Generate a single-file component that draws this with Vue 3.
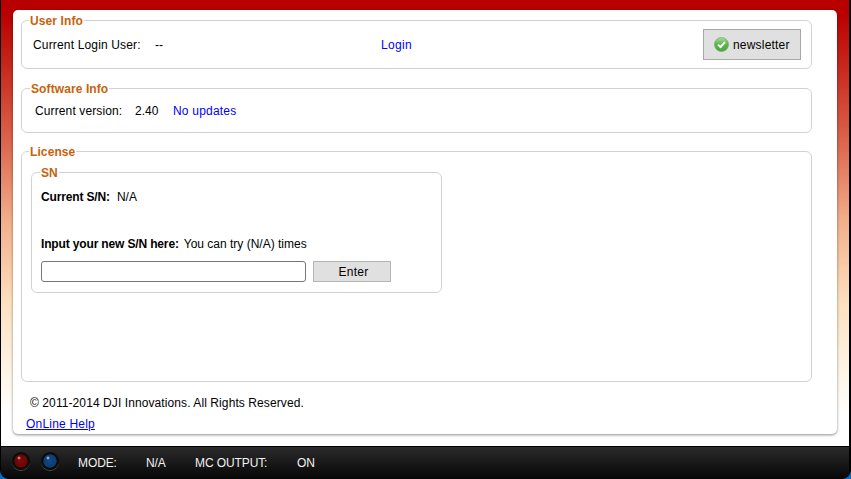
<template>
  <div class="window">
    <div class="stage">
      <main class="card">
        <fieldset class="group user">
          <legend>User Info</legend>
          <div class="user-row">
            <span class="lbl">Current Login User:</span>
            <span class="val">--</span>
            <a class="login">Login</a>
            <button class="news">
              <svg width="15" height="15" viewBox="0 0 15 15">
                <defs>
                  <linearGradient id="g" x1="0" y1="0" x2="0" y2="1">
                    <stop offset="0" stop-color="#a9dc9a" />
                    <stop offset="0.5" stop-color="#58b548" />
                    <stop offset="1" stop-color="#49a83a" />
                  </linearGradient>
                </defs>
                <circle cx="7.5" cy="7.5" r="7" fill="url(#g)" stroke="#6a9c62" stroke-width="0.6" />
                <path d="M4 7.6 L6.5 10 L11 5.2" fill="none" stroke="#fff" stroke-width="2" />
              </svg>
              <span>newsletter</span>
            </button>
          </div>
        </fieldset>

        <fieldset class="group soft">
          <legend>Software Info</legend>
          <div class="soft-row">
            <span class="ver-l">Current version:</span>
            <span class="ver">2.40</span>
            <a class="upd">No updates</a>
          </div>
        </fieldset>

        <fieldset class="group lic">
          <legend>License</legend>
          <fieldset class="group sn">
            <legend>SN</legend>
            <div class="row1"><b>Current S/N:</b><span>N/A</span></div>
            <div class="row2"><b>Input your new S/N here:</b><span>You can try (N/A) times</span></div>
            <div class="row3">
              <input class="inp" type="text" />
              <button class="enter">Enter</button>
            </div>
          </fieldset>
        </fieldset>

        <p class="copy">© 2011-2014 DJI Innovations. All Rights Reserved.</p>
        <a class="help">OnLine Help</a>
      </main>
    </div>

    <footer class="bar">
      <span class="led red"></span>
      <span class="led blue"></span>
      <span class="s mode">MODE:</span>
      <span class="s na">N/A</span>
      <span class="s mc">MC OUTPUT:</span>
      <span class="s on">ON</span>
    </footer>
  </div>
</template>

<script setup>
</script>

<style>
html, body { margin: 0; padding: 0; background: #0a6cc0; }
</style>

<style scoped>
.window {
  width: 851px;
  height: 479px;
  box-sizing: border-box;
  padding: 0 2px 0 1px;
  background: #000;
  border-radius: 0 0 9px 9px;
  font: 12px/14px "Liberation Sans", Arial, sans-serif;
  color: #000;
  overflow: hidden;
  display: flex;
  flex-direction: column;
}
.stage {
  height: 446px;
  flex: none;
  overflow: hidden;
  background: linear-gradient(#b90000 0, #b90000 3%, #c7281c 15%, #dd6a50 33%, #f3b08c 50%, #fde0c0 68%, #fdf3e2 82%, #fff 93%);
}
.card {
  width: 824px;
  height: 424px;
  box-sizing: border-box;
  margin: 10px 0 0 12px;
  padding: 3px 25px 0 8px;
  background: #fff;
  border-radius: 5px;
  box-shadow: 0 1px 3px rgba(0, 0, 0, 0.45);
}
.group {
  margin: 0;
  padding: 0;
  min-width: 0;
  border: 1px solid #d2d2d2;
  border-radius: 6px;
  box-sizing: border-box;
}
legend {
  color: #c8620a;
  font-weight: bold;
  padding: 0 1px;
  margin-left: 7px;
  height: 14px;
  line-height: 16px;
  font-size: 12px;
  letter-spacing: 0.1px;
}
.user { height: 56px; }
.user-row {
  display: flex;
  align-items: center;
  padding: 2px 10px 0 11px;
}
.lbl { width: 122px; letter-spacing: 0.16px; }
.val { width: 226px; }
.login { color: #00f; letter-spacing: 0.35px; }
.news {
  margin-left: auto;
  width: 98px;
  height: 31px;
  box-sizing: border-box;
  border: 1px solid #a8a8a8;
  background: #e0e0e0;
  padding: 0 0 0 10px;
  display: flex;
  align-items: center;
  gap: 4px;
  font: 12px "Liberation Sans", Arial, sans-serif;
  letter-spacing: 0.2px;
  color: #000;
}
.soft { height: 52px; margin-top: 12px; }
.soft > legend { margin-left: 8px; }
.soft-row {
  display: flex;
  padding: 9px 0 0 13px;
}
.ver-l { width: 100px; letter-spacing: 0.12px; }
.ver { width: 38px; }
.upd { color: #00f; letter-spacing: 0.2px; }
.lic { height: 238px; margin-top: 11px; }
.sn { width: 411px; height: 128px; margin: 7px 0 0 9px; }
.sn > legend { margin-left: 8px; }
.row1, .row2, .row3 { padding-left: 9px; display: flex; }
b { letter-spacing: -0.15px; }
.row1 { gap: 7px; margin-top: 11px; }
.row2 { gap: 5px; margin-top: 33px; }
.row3 { gap: 7px; margin-top: 10px; }
.inp {
  width: 265px;
  height: 21px;
  box-sizing: border-box;
  border: 1px solid #767676;
  border-radius: 3px;
  background: #fff;
  padding: 0;
  margin: 0;
}
.enter {
  width: 78px;
  height: 21px;
  box-sizing: border-box;
  border: 1px solid #b4b4b4;
  background: #e0e0e0;
  font: 12px "Liberation Sans", Arial, sans-serif;
  letter-spacing: 0.3px;
  color: #000;
  padding: 0 0 0 3px;
}
.copy { margin: 14px 0 0 9px; line-height: 14px; letter-spacing: 0.09px; }
.help {
  display: inline-block;
  margin: 7px 0 0 5px;
  color: #00f;
  text-decoration: underline;
  line-height: 14px;
  letter-spacing: 0.2px;
}
.bar {
  flex: 1;
  box-sizing: border-box;
  border-top: 1px solid #000;
  border-radius: 0 0 7px 7px;
  background: linear-gradient(#2b2b2b, #060606);
  display: flex;
  align-items: flex-start;
  padding: 5px 0 0 11px;
}
.led {
  flex: none;
  width: 18px;
  height: 18px;
  border-radius: 50%;
  box-shadow: 0 1px 0 #4a4a4a;
}
.red {
  background:
    radial-gradient(circle 2px at 7px 6px, #f4b0b0 0, #f4b0b000 100%),
    radial-gradient(circle 9px at 50% 50%, #7f0a0a 0, #6a0505 70%, #0c0c0c 77%);
}
.blue {
  margin: 0 19px 0 11px;
  background:
    radial-gradient(circle 2px at 7px 6px, #c8e0f8 0, #c8e0f800 100%),
    radial-gradient(circle 9px at 50% 50%, #12497f 0, #0d3d72 70%, #0c0c0c 77%);
}
.s { margin-top: 4px; color: #f2f2f2; letter-spacing: -0.1px; }
.mode { width: 68px; }
.na { width: 49px; }
.mc { width: 102px; }
</style>
